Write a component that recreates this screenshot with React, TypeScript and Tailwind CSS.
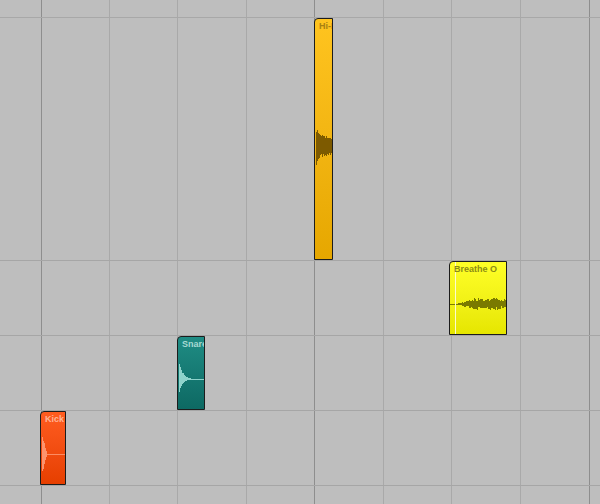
import React from 'react';

// vertical grid lines (x of each line) – every 4th one is a bar line
const gridLines = [41, 109, 177, 246, 314, 383, 451, 520, 589];
const barLines = [41, 314, 589];

const seeded = (seed: number) => {
  let s = seed;
  return () => {
    s = (s * 9301 + 49297) % 233280;
    return s / 233280;
  };
};

// builds a path of 1px vertical strokes around a centre line
const wavePath = (
  from: number,
  to: number,
  center: number,
  env: (x: number) => [number, number],
  seed: number,
  jitter = 0.35
) => {
  const r = seeded(seed);
  let d = '';
  for (let x = from; x < to; x++) {
    const [up, down] = env(x);
    const n1 = 1 - jitter + r() * jitter;
    const n2 = 1 - jitter + r() * jitter;
    const top = center - Math.max(0.5, up * n1);
    const bot = center + Math.max(0.5, down * n2);
    d += `M${x + 0.5} ${top.toFixed(1)}V${bot.toFixed(1)}`;
  }
  return d;
};

interface ClipProps {
  name: string;
  offset: string;
  width: string;
  gradient: string;
  textColor: string;
  children?: React.ReactNode;
}

const Clip: React.FC<ClipProps> = ({ name, offset, width, gradient, textColor, children }) => (
  <div className={`relative h-full shrink-0 border border-[#1c1c1c] rounded-tl-[4px] overflow-hidden bg-gradient-to-b ${gradient} ${offset} ${width}`}>
    {children}
    <div
      className={`relative whitespace-nowrap overflow-hidden pl-1 pt-[2px] text-[9px] leading-[10px] font-bold ${textColor}`}
      style={{ fontFamily: '"Liberation Sans", Arial, sans-serif' }}
    >
      {name}
    </div>
  </div>
);

const KickWave = () => (
  <svg className="absolute inset-0" width="24" height="72" viewBox="0 0 24 72" shapeRendering="crispEdges">
    <path d="M6 42.5H24" stroke="#ff9c78" strokeOpacity="0.8" strokeWidth="1" />
    <path
      d="M1.5 25V59M2.5 29V57M3.5 31V52M4.5 36V48M5.5 39V45"
      stroke="#ffa07e"
      strokeOpacity="0.85"
      strokeWidth="1"
      fill="none"
    />
  </svg>
);

const SnareWave = () => (
  <svg className="absolute inset-0" width="26" height="72" viewBox="0 0 26 72" shapeRendering="crispEdges">
    <path d="M12 42.5H26" stroke="#8fd3cb" strokeWidth="1" />
    <path
      d={wavePath(1, 13, 42, (x) => {
        const a = 17 * Math.exp(-(x - 1) / 3.6);
        return [a, a * 0.75];
      }, 5, 0.15)}
      stroke="#8fd3cb"
      strokeWidth="1"
      fill="none"
    />
  </svg>
);

const HiHatWave = () => (
  <svg className="absolute inset-0" width="17" height="240" viewBox="0 0 17 240" shapeRendering="crispEdges">
    <path
      d={wavePath(1, 17, 127, (x) => {
        const a = 9 + 10 * Math.exp(-(x - 1) / 4);
        return [a, a];
      }, 23, 0.3)}
      stroke="#7d5a00"
      strokeWidth="1"
      fill="none"
    />
  </svg>
);

const BreatheWave = () => (
  <svg className="absolute inset-0" width="56" height="72" viewBox="0 0 56 72" shapeRendering="crispEdges">
    <path d="M0 42.5H9" stroke="#7a7a00" strokeWidth="1" />
    <path
      d={wavePath(8, 56, 42, (x) => {
        const a = x < 24 ? 1 + ((x - 8) / 16) * 5 : 6 + Math.sin(x / 3) * 0.8;
        return [a, a];
      }, 41, 0.55)}
      stroke="#7a7a00"
      strokeWidth="1"
      fill="none"
    />
    <path d="M5.5 0V72" stroke="#fbfbd0" strokeWidth="1" />
  </svg>
);

export default function App() {
  return (
    <div className="relative w-[600px] h-[504px] overflow-hidden bg-[#bebebe]">
      {/* beat grid */}
      <div className="absolute inset-0 flex">
        <div className="w-[41px] shrink-0" />
        {gridLines.map((x, i) => {
          const next = gridLines[i + 1];
          const bar = barLines.includes(x);
          return (
            <div
              key={x}
              className={`h-full border-l ${bar ? 'border-[#8e8e8e]' : 'border-[#a9a9a9]'} ${next ? 'shrink-0' : 'flex-1'}`}
              style={next ? { width: next - x } : undefined}
            />
          );
        })}
      </div>

      {/* lanes */}
      <div className="relative flex flex-col h-full">
        <div className="h-[18px] shrink-0 border-b border-[#a8a8a8]" />

        <div className="h-[243px] shrink-0 flex border-b border-[#a6a6a6]">
          <Clip
            name="Hi-Hat"
            offset="ml-[314px]"
            width="w-[19px]"
            gradient="from-[#ffc41f] to-[#e6a700]"
            textColor="text-[#a88012]"
          >
            <HiHatWave />
          </Clip>
        </div>

        <div className="h-[75px] shrink-0 flex border-b border-[#a6a6a6]">
          <Clip
            name="Breathe O"
            offset="ml-[449px]"
            width="w-[58px]"
            gradient="from-[#ffff26] to-[#e6e600]"
            textColor="text-[#8c8c14]"
          >
            <BreatheWave />
          </Clip>
        </div>

        <div className="h-[75px] shrink-0 flex border-b border-[#a6a6a6]">
          <Clip
            name="Snare"
            offset="ml-[177px]"
            width="w-[28px]"
            gradient="from-[#1f8c84] to-[#0d6963]"
            textColor="text-[#a9d9d3]"
          >
            <SnareWave />
          </Clip>
        </div>

        <div className="h-[75px] shrink-0 flex border-b border-[#a6a6a6]">
          <Clip
            name="Kick"
            offset="ml-[40px]"
            width="w-[26px]"
            gradient="from-[#ff5c1f] to-[#e63f00]"
            textColor="text-[#ffb596]"
          >
            <KickWave />
          </Clip>
        </div>

        <div className="flex-1" />
      </div>
    </div>
  );
}
